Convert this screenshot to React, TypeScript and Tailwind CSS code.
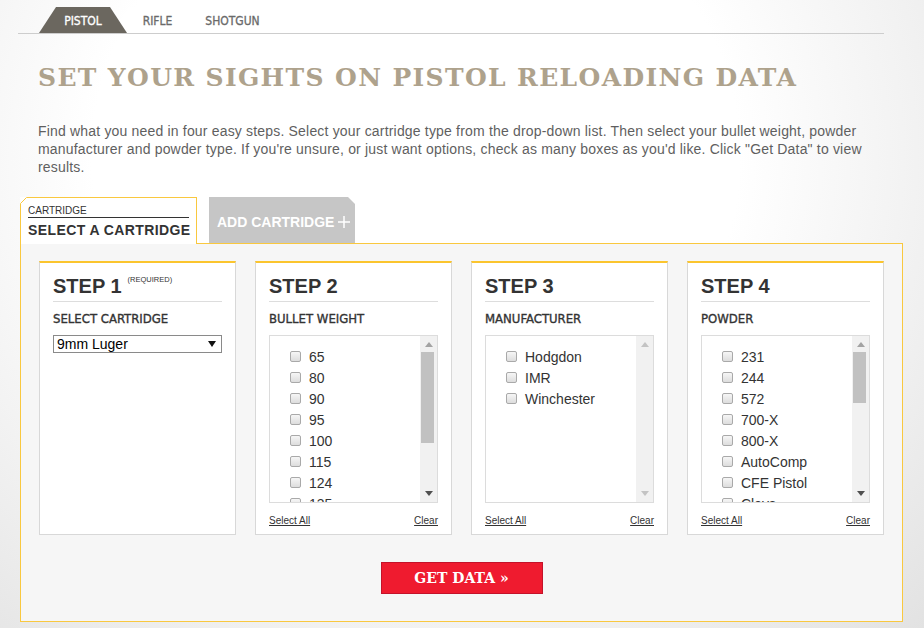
import React from "react";

const tabClip =
  "[clip-path:polygon(17px_0,calc(100%_-_17px)_0,100%_100%,0_100%)]";

function Checkbox() {
  return (
    <span className="inline-block h-[11px] w-[11px] shrink-0 rounded-[2px] border border-[#a9a9a9] bg-gradient-to-b from-[#f6f6f6] to-[#dddddd]" />
  );
}

function Arrow({ up, color }: { up?: boolean; color: string }) {
  return (
    <svg width="8" height="5" viewBox="0 0 8 5">
      {up ? (
        <polygon points="0,5 8,5 4,0" fill={color} />
      ) : (
        <polygon points="0,0 8,0 4,5" fill={color} />
      )}
    </svg>
  );
}

function ListBox({
  items,
  thumb,
}: {
  items: string[];
  thumb?: number;
}) {
  return (
    <div className="flex h-[168px] overflow-hidden border border-[#dcdcdc] bg-white">
      <div className="flex-1 overflow-hidden pl-[20px] pt-[10px]">
        {items.map((it) => (
          <div
            key={it}
            className="flex h-[21px] items-center gap-[8px] text-[14px] leading-[16px] text-[#333] font-['Liberation_Sans',Arial,sans-serif]"
          >
            <Checkbox />
            <span>{it}</span>
          </div>
        ))}
      </div>
      <div className="flex w-[17px] flex-col bg-[#f1f1f1]">
        <div className="flex h-[16px] items-center justify-center">
          <Arrow up color={thumb ? "#a3a3a3" : "#c3c3c3"} />
        </div>
        {thumb ? (
          <div
            className="ml-[1px] w-[13px] bg-[#c1c1c1]"
            style={{ height: thumb }}
          />
        ) : null}
        <div className="flex-1" />
        <div className="flex h-[17px] items-center justify-center">
          <Arrow color={thumb ? "#505050" : "#c3c3c3"} />
        </div>
      </div>
    </div>
  );
}

function Card({
  step,
  label,
  required,
  children,
  links,
}: {
  step: string;
  label: string;
  required?: boolean;
  children: React.ReactNode;
  links?: boolean;
}) {
  return (
    <div className="flex h-[274px] w-[197px] flex-col border-x border-b border-t-2 border-x-[#d8d8d8] border-b-[#d8d8d8] border-t-[#fbc52e] bg-white px-[13px] pt-[11px]">
      <div className="flex items-start border-b border-[#dddddd] pb-[3px]">
        <span className="h-[24px] text-[20px] font-bold leading-[24px] text-[#333] font-['Liberation_Sans',Arial,sans-serif]">
          {step}
        </span>
        {required ? (
          <span className="ml-[6px] mt-[1px] text-[7.5px] leading-[10px] text-[#333] font-['Liberation_Sans',Arial,sans-serif]">
            (REQUIRED)
          </span>
        ) : null}
      </div>
      <div className="mt-[9px] h-[16px] text-[13px] leading-[16px] text-[#333] font-['DejaVu_Sans_Condensed','DejaVu_Sans',sans-serif] [font-stretch:condensed] [-webkit-text-stroke:0.35px_#333]">
        {label}
      </div>
      <div className="mt-[8px]">{children}</div>
      {links ? (
        <div className="mt-[12px] flex justify-between text-[10px] leading-[12px] text-[#333] underline font-['Liberation_Sans',Arial,sans-serif]">
          <span>Select All</span>
          <span>Clear</span>
        </div>
      ) : null}
    </div>
  );
}

export default function App() {
  return (
    <div className="min-h-[628px] w-full overflow-hidden bg-[radial-gradient(ellipse_at_45%_25%,#ffffff_45%,#e2e2e2_100%)] pb-[6px]">
      {/* top tabs */}
      <div className="ml-[18px] mr-[40px] flex border-b border-[#cdcdcd] pl-[21px] pt-[7px] text-[12px] font-['DejaVu_Sans_Condensed','DejaVu_Sans',sans-serif] [font-stretch:condensed]">
        <div
          className={`relative z-10 flex h-[26px] w-[88px] items-center justify-center bg-[#6b675f] pt-[1px] text-white [-webkit-text-stroke:0.3px_#fff] ${tabClip}`}
        >
          PISTOL
        </div>
        <div
          className={`ml-[-15px] flex h-[26px] w-[91px] items-center justify-center bg-white pt-[1px] text-[#6a6a6a] [-webkit-text-stroke:0.3px_#6a6a6a] ${tabClip}`}
        >
          RIFLE
        </div>
        <div
          className={`ml-[-23px] flex h-[26px] w-[105px] items-center justify-center bg-white pt-[1px] text-[#6a6a6a] [-webkit-text-stroke:0.3px_#6a6a6a] ${tabClip}`}
        >
          SHOTGUN
        </div>
      </div>

      {/* title */}
      <h1 className="ml-[38px] mt-[31px] h-[25px] whitespace-nowrap text-[25px] font-bold leading-[25px] tracking-[1.35px] text-[#aea28c] font-['DejaVu_Serif',serif]">
        SET YOUR SIGHTS ON PISTOL RELOADING DATA
      </h1>

      <p className="ml-[38px] mt-[32px] w-[870px] whitespace-nowrap text-[14px] leading-[18px] tracking-[0.18px] text-[#5f5f5f] font-['Liberation_Sans',Arial,sans-serif]">
        Find what you need in four easy steps. Select your cartridge type from
        the drop-down list. Then select your bullet weight, powder
        <br />
        manufacturer and powder type. If you're unsure, or just want options,
        check as many boxes as you'd like. Click "Get Data" to view
        <br />
        results.
      </p>

      {/* cartridge tabs */}
      <div className="ml-[20px] mt-[21px] flex items-start">
        <div className="relative z-10 mb-[-1px] h-[47px] w-[177px] border-x border-t border-[#f9c83f] bg-white pl-[7px] pt-[7px] font-['Liberation_Sans',Arial,sans-serif]">
          <svg
            className="absolute left-[-1px] top-[-1px]"
            width="7"
            height="7"
            viewBox="0 0 7 7"
          >
            <polygon points="0,0 7,0 0,7" fill="#fefefe" />
            <line x1="0.5" y1="6.5" x2="6.5" y2="0.5" stroke="#f9c83f" strokeWidth="1" />
          </svg>
          <div className="mr-[7px] border-b border-[#333] text-[10px] leading-[12px] text-[#333]">
            CARTRIDGE
          </div>
          <div className="mt-[4px] text-[14px] font-bold leading-[17px] tracking-[0.4px] text-[#333]">
            SELECT A CARTRIDGE
          </div>
        </div>
        <div className="ml-[12px] flex h-[46px] w-[146px] items-center gap-[4px] bg-[#c6c6c6] pl-[8px] pt-[4px] text-[14px] font-bold text-white font-['Liberation_Sans',Arial,sans-serif] [clip-path:polygon(0_0,calc(100%_-_7px)_0,100%_7px,100%_100%,0_100%)]">
          <span>ADD CARTRIDGE</span>
          <svg width="12" height="12" viewBox="0 0 12 12">
            <line x1="6" y1="0" x2="6" y2="12" stroke="white" strokeWidth="1.5" />
            <line x1="0" y1="6" x2="12" y2="6" stroke="white" strokeWidth="1.5" />
          </svg>
        </div>
      </div>

      {/* main panel */}
      <div className="ml-[20px] flex w-[883px] flex-col items-center border border-[#f9c83f] bg-[#f6f6f6] px-[18px] pb-[27px] pt-[17px]">
        <div className="flex gap-[19px]">
          <Card step="STEP 1" label="SELECT CARTRIDGE" required>
            <div className="flex h-[18px] items-center justify-between border border-[#8a8a8a] bg-white pl-[3px] pr-[5px] text-[14px] leading-[16px] text-black font-['Liberation_Sans',Arial,sans-serif]">
              <span>9mm Luger</span>
              <svg width="8" height="6" viewBox="0 0 8 6">
                <polygon points="0,0 8,0 4,6" fill="#111" />
              </svg>
            </div>
          </Card>
          <Card step="STEP 2" label="BULLET WEIGHT" links>
            <ListBox
              items={["65", "80", "90", "95", "100", "115", "124", "135"]}
              thumb={91}
            />
          </Card>
          <Card step="STEP 3" label="MANUFACTURER" links>
            <ListBox items={["Hodgdon", "IMR", "Winchester"]} />
          </Card>
          <Card step="STEP 4" label="POWDER" links>
            <ListBox
              items={[
                "231",
                "244",
                "572",
                "700-X",
                "800-X",
                "AutoComp",
                "CFE Pistol",
                "Clays",
              ]}
              thumb={51}
            />
          </Card>
        </div>
        <button className="mt-[27px] flex h-[32px] w-[162px] items-center justify-center border border-[#c4122a] bg-[#ef1b2f] text-[14px] font-bold text-white font-['DejaVu_Serif',serif]">
          GET DATA »
        </button>
      </div>
    </div>
  );
}
